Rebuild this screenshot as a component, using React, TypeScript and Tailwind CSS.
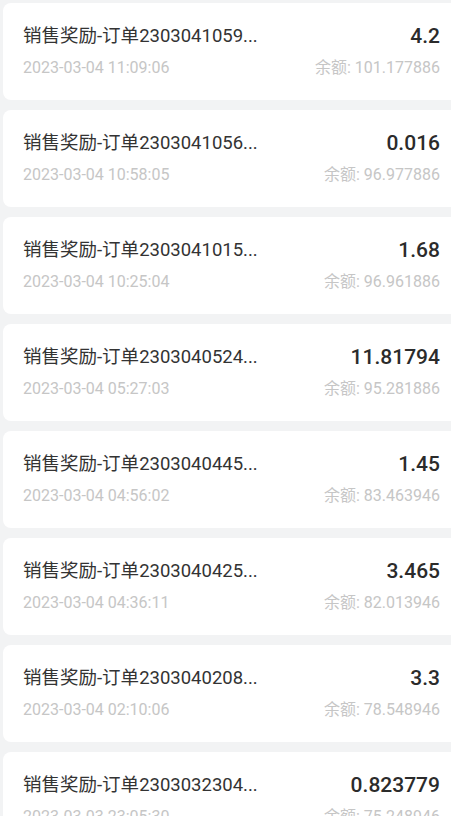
const records = [
  { id: "2303041059", amount: "4.2", time: "2023-03-04 11:09:06", balance: "101.177886" },
  { id: "2303041056", amount: "0.016", time: "2023-03-04 10:58:05", balance: "96.977886" },
  { id: "2303041015", amount: "1.68", time: "2023-03-04 10:25:04", balance: "96.961886" },
  { id: "2303040524", amount: "11.81794", time: "2023-03-04 05:27:03", balance: "95.281886" },
  { id: "2303040445", amount: "1.45", time: "2023-03-04 04:56:02", balance: "83.463946" },
  { id: "2303040425", amount: "3.465", time: "2023-03-04 04:36:11", balance: "82.013946" },
  { id: "2303040208", amount: "3.3", time: "2023-03-04 02:10:06", balance: "78.548946" },
  { id: "2303032304", amount: "0.823779", time: "2023-03-03 23:05:30", balance: "75.248946" },
];

function RecordCard({ id, amount, time, balance }: (typeof records)[number]) {
  return (
    <div className="ml-[3px] mr-[-10px] rounded-[8px] bg-white pl-[20px] pr-[21px] pt-[21px] pb-[22px]">
      <div className="flex h-[24px] items-center justify-between">
        <span className="text-[18.5px] leading-[24px] text-[#333]">销售奖励-订单{id}...</span>
        <span className="text-[21px] leading-[24px] font-medium text-[#2b2b2b]">{amount}</span>
      </div>
      <div className="mt-[10px] flex h-[20px] items-center justify-between text-[16px] leading-[20px] text-[#c6c6c6]">
        <span>{time}</span>
        <span>余额: {balance}</span>
      </div>
    </div>
  );
}

export default function App() {
  return (
    <div
      className="h-[816px] w-[451px] overflow-hidden bg-[#f2f3f4] pt-[3px]"
      style={{ fontFamily: 'Roboto, "Noto Sans CJK SC", sans-serif' }}
    >
      <div className="flex flex-col gap-[10px]">
        {records.map((r) => (
          <RecordCard key={r.id} {...r} />
        ))}
      </div>
    </div>
  );
}
